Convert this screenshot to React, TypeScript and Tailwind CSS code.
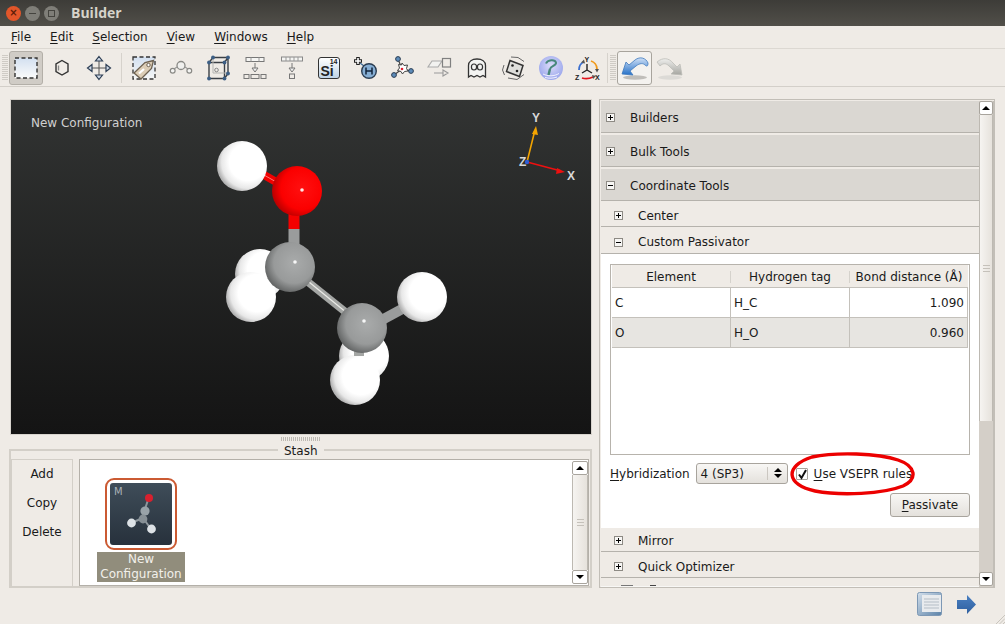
import React from "react";

function Sep() {
  return <div className="w-px h-[30px] bg-[#d6d2cc] shrink-0" />;
}

function Grip({ className = "" }: { className?: string }) {
  return (
    <div className={"w-[6px] h-[26px] shrink-0 flex flex-col gap-px " + className}>
      {Array.from({ length: 13 }).map((_, i) => (
        <div key={i} className="h-px w-full bg-[#cfcbc5]" />
      ))}
    </div>
  );
}

function Ic({ children, s = 28 }: { children: React.ReactNode; s?: number }) {
  return (
    <svg width={s} height={s} viewBox="0 0 28 28" fill="none">
      {children}
    </svg>
  );
}

const SelectIcon = () => (
  <Ic>
    <defs>
      <linearGradient id="selg" x1="0" y1="0" x2="0" y2="1">
        <stop offset="0" stopColor="#d3e0f0" />
        <stop offset="1" stopColor="#fbfbfa" />
      </linearGradient>
    </defs>
    <rect x="3" y="4" width="22" height="20" fill="url(#selg)" stroke="#333" strokeWidth="1.4" strokeDasharray="4 2.5" />
  </Ic>
);
const HexIcon = () => (
  <Ic>
    <path d="M13 6.5l6 3.5v7.5l-6 3.5-6-3.5V10z" stroke="#333" strokeWidth="1.4" />
    <path d="M9.5 11.5v5" stroke="#888" strokeWidth="1.3" />
  </Ic>
);
const MoveIcon = () => (
  <Ic>
    <path d="M14 6v16M6 14h16" stroke="#555" strokeWidth="1" />
    <path d="M14 2.5l3.5 4.5h-7zM14 25.5l3.5-4.5h-7zM2.5 14l4.5-3.5v7zM25.5 14L21 10.5v7z" fill="#cfd9e6" stroke="#2e3f55" strokeWidth="1.2" />
  </Ic>
);
const TagIcon = () => (
  <Ic>
    <defs>
      <linearGradient id="tagg" x1="0" y1="0" x2="0" y2="1">
        <stop offset="0" stopColor="#d3e0f0" />
        <stop offset="1" stopColor="#f6f7f7" />
      </linearGradient>
    </defs>
    <rect x="3" y="3" width="22" height="22" fill="url(#tagg)" stroke="#333" strokeWidth="1.3" strokeDasharray="4 2.5" />
    <path d="M4 19L15 8.5l8.5-2-2 8L11 25z" fill="#dccdb6" stroke="#6e6252" strokeWidth="1.3" />
    <circle cx="18.5" cy="11" r="1.7" fill="#fff" stroke="#6e6252" />
    <path d="M9 19.5l5-4.5" stroke="#fff" strokeWidth="2.2" />
  </Ic>
);
const ChainIcon = () => (
  <Ic>
    <path d="M7 15l3-2M21 15l-3-2" stroke="#999" strokeWidth="1.2" />
    <circle cx="14" cy="11.5" r="4" fill="#f0f0ee" stroke="#8a8a86" strokeWidth="1.3" />
    <circle cx="5.7" cy="16.7" r="2.4" fill="#f4f4f2" stroke="#8a8a86" strokeWidth="1.2" />
    <circle cx="22.3" cy="16.7" r="2.4" fill="#f4f4f2" stroke="#8a8a86" strokeWidth="1.2" />
  </Ic>
);
const CellIcon = () => (
  <Ic>
    <path d="M5 8.5h15.5v16H5zM5 8.5l4-5h15v16l-3.5 5M20.5 8.5l3.5-5" stroke="#3a3f45" strokeWidth="1.4" />
    <path d="M9 3.5v15.5H24" stroke="#b5b5b2" strokeWidth="1" />
    <circle cx="12.5" cy="16" r="1.8" stroke="#888" />
    {[[5, 8.5], [20.5, 8.5], [5, 24.5], [20.5, 24.5], [24, 3.5], [24, 19.5], [9, 3.5]].map(([x, y], i) => (
      <circle key={i} cx={x} cy={y} r="1.9" fill="#3d5f85" />
    ))}
  </Ic>
);
const Arrow = ({ y }: { y: number }) => (
  <path d={`M14 ${y}v5M11 ${y + 5}h6l-3 4z`} stroke="#777" strokeWidth="1" fill="#eee" />
);
const SplitUp = () => (
  <Ic>
    <rect x="5" y="3.5" width="18" height="4" fill="#f5f5f3" stroke="#777" />
    <path d="M10 3.5v4M18 3.5v4" stroke="#999" />
    <Arrow y={9} />
    <rect x="3" y="20.5" width="5" height="4" stroke="#777" />
    <rect x="10" y="20.5" width="8" height="4" stroke="#777" />
    <rect x="20" y="20.5" width="5" height="4" stroke="#777" />
  </Ic>
);
const SplitDown = () => (
  <Ic>
    <rect x="3.5" y="3" width="21" height="4" fill="#f5f5f3" stroke="#888" />
    <path d="M8 3v4M12 3v4M16 3v4M20 3v4" stroke="#999" />
    <Arrow y={9} />
    <rect x="11.5" y="20" width="5" height="4.5" stroke="#777" />
  </Ic>
);
const SiIcon = () => (
  <div className="w-[22px] h-[22px] rounded-[3px] border border-[#333] bg-gradient-to-b from-white to-[#bfd3e6] relative overflow-hidden font-['Liberation_Sans',sans-serif] font-bold text-[#222]">
    <span className="absolute left-[2px] top-[7px] text-[14px] leading-[13px]">Si</span>
    <span className="absolute right-[1px] top-0 text-[7px] leading-[7px]">14</span>
  </div>
);
const HIcon = () => (
  <Ic>
    <path d="M8 9l4 3" stroke="#3f6b96" strokeWidth="1.4" />
    <path d="M6 3v8M2 7h8" stroke="#222" strokeWidth="3.6" />
    <path d="M6 4v6M3 7h6" stroke="#fff" strokeWidth="1.6" />
    <circle cx="17" cy="17" r="7.3" fill="#86aed4" stroke="#2b3d52" strokeWidth="1.4" />
    <path d="M14 13.5v7M20 13.5v7M14 17h6" stroke="#10233a" strokeWidth="1.5" />
  </Ic>
);
const StarIcon = () => (
  <Ic>
    <path d="M13 15L9 5M13 15L5 21M13 15L22 17" stroke="#444" strokeWidth="1.2" />
    <path d="M13 9l2 2.5 3.5-.5-1 3.5 1.5 2.5-3.5.5-2 2.5-1.5-2.5-3.5-1 2-2.5-1-3.5 3 .5z" fill="#fff" stroke="#444" />
    <circle cx="13" cy="15" r="1.3" fill="#e02030" />
    <circle cx="9" cy="5" r="2.4" fill="#5d8cba" stroke="#2b3d52" />
    <circle cx="5" cy="21" r="2.4" fill="#5d8cba" stroke="#2b3d52" />
    <circle cx="22" cy="17" r="2.4" fill="#5d8cba" stroke="#2b3d52" />
  </Ic>
);
const TransformIcon = () => (
  <Ic>
    <path d="M6 7h10l-4 6H2z" fill="#f2f2f0" stroke="#aaa" strokeWidth="1.1" />
    <rect x="16.5" y="4.5" width="8" height="8.5" stroke="#808080" strokeWidth="1.2" />
    <path d="M8 19h9M17 16l5 3-5 3z" stroke="#999" strokeWidth="1.1" />
  </Ic>
);
const GhostIcon = () => (
  <Ic>
    <path d="M5.5 23V11.5c0-4 3.5-6.5 8.5-6.5s8.5 2.5 8.5 6.5V23l-2.5-1.5-3 1.5-3-1.5-3 1.5-3-1.5z" fill="#f4f4f2" stroke="#333" strokeWidth="1.3" />
    <ellipse cx="11" cy="13" rx="2.6" ry="3" stroke="#333" strokeWidth="1.2" />
    <ellipse cx="17" cy="13" rx="2.6" ry="3" stroke="#333" strokeWidth="1.2" />
  </Ic>
);
const DiceIcon = () => (
  <Ic>
    <path d="M10 6.5l13 5-3.5 11-13-5z" fill="#dededb" stroke="#333" strokeWidth="1.5" />
    <circle cx="12.5" cy="11.5" r="1.3" fill="#222" />
    <circle cx="17" cy="17" r="1.3" fill="#222" />
    <path d="M4 11l-1.5 5 2 5M11 3l7 .5 6 4M8 24l9 1.5 7-5" stroke="#666" strokeWidth="1" />
  </Ic>
);
const HelpIcon = () => (
  <Ic>
    <defs>
      <radialGradient id="hg" cx="0.5" cy="0.4" r="0.6">
        <stop offset="0" stopColor="#dcdcf9" />
        <stop offset="1" stopColor="#9aa6ec" />
      </radialGradient>
    </defs>
    <circle cx="14" cy="14" r="12" fill="url(#hg)" />
    <path d="M9 9.5c1.500-4 9-4.500 10-1 .8 3-5 3.500-6 6.500" stroke="#48887b" strokeWidth="2" />
    <path d="M13 15l-1.500 6" stroke="#48887b" strokeWidth="2.400" />
    <path d="M6 20c5 2.500 11 2.500 16-.5M8 23.500c4 1 8 1 12-.5" stroke="#f2f2ff" strokeWidth="1" />
  </Ic>
);
const AxesIcon = () => (
  <svg width="28" height="30" viewBox="0 0 28 30" fill="none">
    <path d="M13 17v-6M13 17l-5 3M13 17l5 3" stroke="#222" strokeWidth="1.4" />
    <path d="M5 17c0-4 2-7 5-8" stroke="#3a6fd0" strokeWidth="1.8" />
    <path d="M17 8c3 1 6 4 6 8" stroke="#f09a1c" strokeWidth="1.8" />
    <path d="M8 25c3 1 7 1 11-1" stroke="#e0141c" strokeWidth="1.8" />
    <path d="M10 6.500l1 4-4-1zM21 16l4 0-2 3.500zM18 22l4 1-3 3z" fill="#555" />
    <text x="10.500" y="9" fontSize="7" fontWeight="700" fill="#222" fontFamily="Liberation Sans">Y</text>
    <text x="1" y="27" fontSize="7" fontWeight="700" fill="#222" fontFamily="Liberation Sans">Z</text>
    <text x="21" y="27" fontSize="7" fontWeight="700" fill="#222" fontFamily="Liberation Sans">X</text>
  </svg>
);
const Ribbon = ({ grey }: { grey?: boolean }) => (
  <svg width="30" height="26" viewBox="0 0 30 26" fill="none">
    <defs>
      <linearGradient id={grey ? "rbg" : "rbb"} x1="0" y1="0" x2="0" y2="1">
        <stop offset="0" stopColor={grey ? "#eeeeec" : "#cfe0f6"} />
        <stop offset="1" stopColor={grey ? "#a5a5a0" : "#2470c8"} />
      </linearGradient>
    </defs>
    <ellipse cx="15" cy="22.500" rx="12" ry="2.200" fill={grey ? "#dcdad6" : "#c0beba"} />
    {grey ? (
      <path d="M2 7c6-5 12-4 16 1l4 4 3-3 2 11-11-1 3-3-5-5c-3-3-6-3-9 0z" fill="url(#rbg)" stroke="#bdbdb8" strokeWidth="0.800" />
    ) : (
      <path d="M28 8c-2-5-8-7-13-3l-6 5-3-3-4 12 11 1-3-4 6-5c4-3 7-3 9-1 2 2 3 1 3-2z" fill="url(#rbb)" stroke="#3d79bd" strokeWidth="0.800" />
    )}
  </svg>
);

const icons = [TagIcon, ChainIcon, CellIcon, SplitUp, SplitDown, SiIcon, HIcon, StarIcon, TransformIcon, GhostIcon, DiceIcon, HelpIcon, AxesIcon];

function Sphere({ x, y, id, r = 25 }: { x: number; y: number; id: string; r?: number }) {
  return <circle cx={x} cy={y} r={r} fill={`url(#${id})`} />;
}
function Spec({ x, y }: { x: number; y: number }) {
  return <circle cx={x} cy={y} r="1.800" fill="#fff" opacity="0.9" />;
}

function Molecule() {
  return (
    <svg className="absolute left-0 top-0" width="580" height="333" viewBox="11 100 580 333" fill="none">
      <defs>
        <radialGradient id="hh" cx="0.62" cy="0.42" r="0.62">
          <stop offset="0" stopColor="#fff" />
          <stop offset="0.6" stopColor="#fff" />
          <stop offset="0.85" stopColor="#e8e8e8" />
          <stop offset="1" stopColor="#b4b4b4" />
        </radialGradient>
        <radialGradient id="oo" cx="0.6" cy="0.45" r="0.6">
          <stop offset="0" stopColor="#ff1010" />
          <stop offset="0.7" stopColor="#fb0000" />
          <stop offset="1" stopColor="#bb0000" />
        </radialGradient>
        <radialGradient id="cc" cx="0.58" cy="0.42" r="0.62">
          <stop offset="0" stopColor="#a9abab" />
          <stop offset="0.65" stopColor="#989a9a" />
          <stop offset="1" stopColor="#5f6161" />
        </radialGradient>
      </defs>
      <Sphere x={260} y={274} id="hh" />
      <Sphere x={364} y={356} id="hh" />
      <path d="M264 175l14 8" stroke="#f10000" strokeWidth="8" />
      <path d="M264 175l14 8" stroke="#ff7a7a" strokeWidth="1" />
      <path d="M294 214v15" stroke="#f40000" strokeWidth="11" />
      <path d="M294 229v18" stroke="#9a9c9c" strokeWidth="11" />
      <path d="M308 282l40 32" stroke="#a4a6a4" strokeWidth="8" />
      <path d="M309 282l38 31" stroke="#ecece8" strokeWidth="1.200" />
      <path d="M380 321l24-13" stroke="#9a9c9c" strokeWidth="10" />
      <Sphere x={242} y={166} id="hh" />
      <Sphere x={297} y={191} id="oo" />
      <Sphere x={422} y={297} id="hh" />
      <Sphere x={251} y={297} id="hh" />
      <path d="M282 273l-12 9" stroke="#a4a6a4" strokeWidth="10" />
      <Sphere x={290} y={267} id="cc" />
      <Sphere x={355} y={380} id="hh" />
      <path d="M359 340v16" stroke="#a4a6a4" strokeWidth="10" />
      <Sphere x={362} y={328} id="cc" />
      <Spec x={302} y={190} />
      <Spec x={295} y={262} />
      <Spec x={364} y={321} />
      <path d="M527 162l8-32" stroke="#f5a500" strokeWidth="1.600" />
      <path d="M536 126l-4 8 6 1z" fill="#f5a500" />
      <path d="M527 162l34 9" stroke="#ee1010" strokeWidth="1.600" />
      <path d="M565 172l-8-4-1 6z" fill="#ee1010" />
      <circle cx="527" cy="162" r="2.200" fill="#2f5fd8" />
      <g fontFamily="Liberation Sans" fontWeight="700" fontSize="12" fill="#d8d8d8">
        <text x="532" y="122">Y</text>
        <text x="519" y="166">Z</text>
        <text x="567" y="180">X</text>
      </g>
    </svg>
  );
}

function SbBtn({ up }: { up?: boolean }) {
  return (
    <div className="h-[14px] shrink-0 bg-white border border-[#a8a49d] rounded-[2px] flex items-center justify-center">
      <div className={"w-0 h-0 border-x-[4px] border-x-transparent " + (up ? "border-b-[4px] border-b-black" : "border-t-[4px] border-t-black")} />
    </div>
  );
}

function Thumb({ className = "" }: { className?: string }) {
  return (
    <div className={"bg-gradient-to-r from-[#f6f4f1] to-[#e6e2dc] border-x border-[#bdb9b2] flex flex-col items-center justify-center gap-[2px] " + className}>
      <div className="w-[7px] h-px bg-[#c5c1ba]" />
      <div className="w-[7px] h-px bg-[#c5c1ba]" />
      <div className="w-[7px] h-px bg-[#c5c1ba]" />
    </div>
  );
}

function Exp({ open }: { open?: boolean }) {
  return (
    <div className="w-[9px] h-[9px] border border-[#8d8a84] bg-[#f7f6f4] relative shrink-0">
      <div className="absolute left-[1px] top-[3px] w-[5px] h-px bg-black" />
      {!open && <div className="absolute left-[3px] top-[1px] w-px h-[5px] bg-black" />}
    </div>
  );
}

function MainRow({ label, open }: { label: string; open?: boolean }) {
  return (
    <div className="h-[32px] mb-[2px] pt-[2px] bg-[#dad7d2] border-b border-[#b5b2ac] flex items-center pl-[5px] shrink-0">
      <Exp open={open} />
      <span className="ml-[15px]">{label}</span>
    </div>
  );
}

function SubRow({ label, open }: { label: string; open?: boolean }) {
  return (
    <div className="h-[24px] mb-[2px] pt-[2px] bg-[#efebe6] border-b border-[#b5b2ac] flex items-center pl-[13px] shrink-0">
      <Exp open={open} />
      <span className="ml-[15px]">{label}</span>
    </div>
  );
}

const Cell = ({ w, className = "", children }: { w: string; className?: string; children: React.ReactNode }) => (
  <div className={"h-full flex items-center px-[3px] border-r border-b border-[#c4c1bb] " + w + " " + className}>{children}</div>
);

export default function App() {
  return (
    <div className="w-[1005px] h-[624px] overflow-hidden bg-[#efebe6] flex flex-col font-['DejaVu_Sans',sans-serif] text-[12px] leading-none text-[#1a1a1a]">
      {/* title bar */}
      <div className="h-[26px] shrink-0 bg-gradient-to-b from-[#3d3c38] to-[#514f49] flex items-center pl-[6px]">
        <div className="w-[15px] h-[15px] rounded-full bg-[#e2562a] flex items-center justify-center text-[10px] text-[#5c1c08] font-bold">×</div>
        <div className="w-[15px] h-[15px] rounded-full bg-[#7f7e78] ml-[4px] flex items-center justify-center">
          <div className="w-[7px] h-px bg-[#45443f]" />
        </div>
        <div className="w-[15px] h-[15px] rounded-full bg-[#7f7e78] ml-[4px] flex items-center justify-center">
          <div className="w-[7px] h-[7px] border border-[#45443f]" />
        </div>
        <span className="ml-[12px] text-[#d6d3ca] font-['Open_Sans',sans-serif] font-bold text-[14px]">Builder</span>
      </div>
      {/* menu */}
      <div className="h-[23px] shrink-0 flex items-center pl-[11px] gap-[19px] text-[12px] border-b border-[#dcd8d2]">
        {[["F", "ile"], ["E", "dit"], ["S", "election"], ["V", "iew"], ["W", "indows"], ["H", "elp"]].map(([a, b]) => (
          <span key={a}>
            <u className="underline-offset-2">{a}</u>
            {b}
          </span>
        ))}
      </div>
      {/* toolbar */}
      <div className="h-[38px] shrink-0 flex items-center pl-[2px] border-b border-[#d3cfc9]">
        <Grip />
        <div className="ml-[1px] w-[34px] h-[34px] rounded-[3px] bg-[#d0ccc6] border border-[#b3afa8] flex items-center justify-center shrink-0">
          <SelectIcon />
        </div>
        <div className="w-[37px] flex justify-center ml-[1px] shrink-0"><HexIcon /></div>
        <div className="w-[36px] flex justify-center shrink-0"><MoveIcon /></div>
        <div className="ml-[4px] mr-[3px]"><Sep /></div>
        {icons.map((I, i) => (
          <div key={i} className="w-[37px] flex justify-center shrink-0"><I /></div>
        ))}
        <div className="ml-[1px]"><Sep /></div>
        <Grip className="ml-[2px]" />
        <div className="ml-[1px] w-[35px] h-[34px] rounded-[3px] bg-[#f4f2ef] border border-[#a8a49d] flex items-center justify-center shrink-0">
          <Ribbon />
        </div>
        <div className="ml-[3px]"><Ribbon grey /></div>
      </div>
      {/* main */}
      <div className="flex-1 min-h-0 flex pl-[9px] pr-[10px] pt-[12px] gap-[7px]">
        {/* left */}
        <div className="w-[583px] flex flex-col shrink-0">
          <div className="relative ml-[1px] h-[336px] shrink-0 border border-[#d8d4ce] bg-gradient-to-b from-[#323433] to-[#141414] overflow-hidden">
            <span className="absolute left-[20px] top-[17px] text-[#d0d0d0]">New Configuration</span>
            <Molecule />
          </div>
          <div className="h-[7px] shrink-0 flex items-end justify-center pb-px gap-px">
            {Array.from({ length: 20 }).map((_, i) => (
              <div key={i} className="w-px h-[4px] bg-[#bdb9b2]" />
            ))}
          </div>
          <div className="relative flex-1 min-h-0 mt-[7px] border-[2px] border-[#d3cfc8] flex pt-[8px]">
            <span className="absolute left-[267px] -top-[7px] bg-[#efebe6] px-[6px] leading-[14px]">Stash</span>
            <div className="w-[62px] shrink-0 flex flex-col items-center pt-[8px] gap-[17px] border-x border-t border-[#d3cfc8]">
              <span>Add</span>
              <span>Copy</span>
              <span>Delete</span>
            </div>
            <div className="ml-[6px] mr-px flex-1 flex bg-white border border-[#b4b0a9] min-w-0">
              <div className="flex-1 relative">
                <div className="absolute left-[25px] top-[18px] w-[72px] h-[72px] border-[2px] border-[#cb5a32] rounded-[9px] p-[3px]">
                  <div className="relative w-full h-full rounded-[3px] bg-gradient-to-b from-[#3f4d59] to-[#27313c] overflow-hidden">
                    <span className="absolute left-[4px] top-[4px] text-[#aab2b8] text-[10px]">M</span>
                    <svg className="absolute left-0 top-0" width="62" height="62" viewBox="110 483 62 62" fill="none">
                      <path d="M149 497l-4 12M143 518l-12 5M143 518l8 11" stroke="#8d969c" strokeWidth="2" />
                      <circle cx="149" cy="498" r="4" fill="#d8202e" />
                      <circle cx="145" cy="511" r="4.600" fill="#98a2a8" />
                      <circle cx="143" cy="519" r="4.400" fill="#868f95" />
                      <circle cx="131.500" cy="523" r="4.400" fill="#dde2e6" />
                      <circle cx="151.500" cy="529" r="4.400" fill="#dde2e6" />
                    </svg>
                  </div>
                </div>
                <div className="absolute left-[17px] top-[92px] w-[88px] h-[30px] bg-[#918d7c] text-[#f2f0ea] text-center leading-[15px]">
                  New
                  <br />
                  Configuration
                </div>
              </div>
              <div className="w-[16px] shrink-0 flex flex-col py-px">
                <SbBtn up />
                <Thumb className="flex-1" />
                <SbBtn />
              </div>
            </div>
          </div>
        </div>
        {/* right */}
        <div className="flex-1 flex border border-[#c2beb7] bg-[#efebe6] min-w-0 pt-px pl-px">
          <div className="flex-1 min-w-0 flex flex-col overflow-hidden">
            <MainRow label="Builders" />
            <MainRow label="Bulk Tools" />
            <MainRow label="Coordinate Tools" open />
            <SubRow label="Center" />
            <div className="h-[25px] pt-[2px] bg-[#efebe6] border-b border-[#b5b2ac] flex items-center pl-[13px] shrink-0">
              <Exp open />
              <span className="ml-[15px]">Custom Passivator</span>
            </div>
            <div className="h-[274px] shrink-0 bg-white pl-[9px] pr-[9px] pt-[10px]">
              <div className="h-[191px] border border-[#b7b3ac] px-px">
                <div className="h-[23px] pt-[2px] flex items-center bg-[#efebe6] text-center border-b border-[#c4c1bb]">
                  <div className="w-[119px] border-r border-[#d5d2cc]">Element</div>
                  <div className="w-[119px] border-r border-[#d5d2cc]">Hydrogen tag</div>
                  <div className="flex-1">Bond distance (Å)</div>
                </div>
                <div className="h-[30px] flex">
                  <Cell w="w-[119px]">C</Cell>
                  <Cell w="w-[119px]">H_C</Cell>
                  <Cell w="flex-1 justify-end">1.090</Cell>
                </div>
                <div className="h-[30px] flex bg-[#e7e5e1]">
                  <Cell w="w-[119px]">O</Cell>
                  <Cell w="w-[119px]">H_O</Cell>
                  <Cell w="flex-1 justify-end">0.960</Cell>
                </div>
              </div>
              <div className="h-[21px] mt-[8px] flex items-center relative">
                <span><u className="underline-offset-2">H</u>ybridization</span>
                <div className="ml-[6px] w-[92px] h-[21px] border border-[#a8a49d] rounded-[3px] bg-gradient-to-b from-[#f8f7f5] to-[#e4e1dc] flex items-center pl-[4px] relative">
                  4 (SP3)
                  <div className="absolute right-[19px] top-[3px] h-[13px] w-px bg-[#cbc7c1]" />
                  <div className="absolute right-[5px] top-[4px] flex flex-col gap-[2px]">
                    <div className="w-0 h-0 border-x-[4px] border-x-transparent border-b-[4px] border-b-black" />
                    <div className="w-0 h-0 border-x-[4px] border-x-transparent border-t-[4px] border-t-black" />
                  </div>
                </div>
                <div className="ml-[8px] w-[12px] h-[12px] border border-[#a8a49d] rounded-[1px] relative bg-white">
                  <svg className="absolute -left-px -top-[2px]" width="13" height="14" viewBox="0 0 13 14" fill="none">
                    <path d="M3 7.500l2.500 3.500L10 3" stroke="#111" strokeWidth="2" />
                  </svg>
                </div>
                <span className="ml-[6px]"><u className="underline-offset-2">U</u>se VSEPR rules</span>
                <svg className="absolute left-[178px] -top-[11px]" width="130" height="44" viewBox="0 0 130 44" fill="none">
                  <path d="M24 5C48 0 90 1 110 8c18 6 20 19 5 26-20 8-62 10-88 5C-2 33-4 14 24 5z" stroke="#ec0000" strokeWidth="3.400" />
                </svg>
              </div>
              <div className="flex justify-end mt-[9px]">
                <div className="w-[80px] h-[24px] border border-[#a8a49d] rounded-[3px] bg-gradient-to-b from-[#f8f7f5] to-[#e4e1dc] flex items-center justify-center">
                  <span><u className="underline-offset-2">P</u>assivate</span>
                </div>
              </div>
            </div>
            <SubRow label="Mirror" />
            <SubRow label="Quick Optimizer" />
            <div className="flex-1 min-h-0 border-b border-[#f8f7f5] flex items-end gap-[1px] pl-[20px]">
              <div className="w-[12px] h-px bg-[#777]" />
              <div className="ml-[16px] w-[6px] h-px bg-[#444]" />
            </div>
          </div>
          <div className="w-[15px] shrink-0 flex flex-col bg-[#d4cfc8] border-r border-[#c2beb7] pb-px">
            <SbBtn up />
            <Thumb className="h-[306px] shrink-0" />
            <div className="flex-1" />
            <SbBtn />
          </div>
        </div>
      </div>
      {/* bottom bar */}
      <div className="h-[36px] shrink-0 flex items-center justify-end">
        <svg width="25" height="24" viewBox="0 0 25 24" fill="none" className="mt-[-4px]">
          <defs>
            <linearGradient id="ng" x1="0" y1="0" x2="1" y2="1">
              <stop offset="0" stopColor="#d3dfeb" />
              <stop offset="1" stopColor="#5b82a8" />
            </linearGradient>
          </defs>
          <rect x="0.500" y="0.500" width="24" height="23" rx="2" fill="url(#ng)" stroke="#7d98b5" />
          <rect x="5" y="3" width="19" height="17" fill="#e8ebee" />
          <path d="M7 7h15M7 10h15M7 13h15M7 16h15" stroke="#b4bdc6" />
        </svg>
        <svg width="20" height="21" viewBox="0 0 20 21" fill="none" className="ml-[15px] mt-[-4px]">
          <defs>
            <linearGradient id="ag" x1="0" y1="0" x2="0" y2="1">
              <stop offset="0" stopColor="#4a80c2" />
              <stop offset="1" stopColor="#2f5f9f" />
            </linearGradient>
          </defs>
          <path d="M0 6h10V1l9 9.500-9 9.500v-5H0z" fill="url(#ag)" />
        </svg>
        <svg width="10" height="10" viewBox="0 0 10 10" className="ml-[18px] self-end" fill="none">
          <path d="M10 1L1 10M10 4.500L4.500 10M10 8L8 10" stroke="#c9c5be" />
        </svg>
      </div>
    </div>
  );
}
